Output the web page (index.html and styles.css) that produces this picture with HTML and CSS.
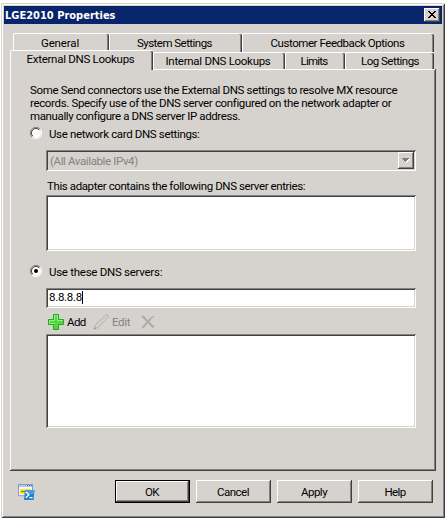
FILE: index.html
```html
<!DOCTYPE html>
<html lang="en">
<head>
<meta charset="utf-8">
<title>LGE2010 Properties</title>
<link rel="stylesheet" href="styles.css">
</head>
<body>
<div class="window">
  <div class="titlebar">
    <span class="title">LGE2010 Properties</span>
    <span class="close">
      <svg width="8" height="7" viewBox="0 0 8 7" shape-rendering="crispEdges"><path d="M0 0h2v1h1v1h2v-1h1v-1h2v1h-1v1h-1v1h-1v1h1v1h1v1h1v1h-2v-1h-1v-1h-2v1h-1v1h-2v-1h1v-1h1v-1h1v-1h-1v-1h-1v-1h-1z"/></svg>
    </span>
  </div>

  <div class="tabs back">
    <div class="tab general">General</div>
    <div class="tab system">System Settings</div>
    <div class="tab feedback">Customer Feedback Options</div>
  </div>
  <div class="tabs front">
    <div class="tab external selected">External DNS Lookups</div>
    <div class="tab internal">Internal DNS Lookups</div>
    <div class="tab limits">Limits</div>
    <div class="tab log">Log Settings</div>
  </div>

  <div class="panel">
    <p class="intro">Some Send connectors use the External DNS settings to resolve MX resource<br>records. Specify use of the DNS server configured on the network adapter or<br><span class="tight">manually configure a DNS server IP address.</span></p>

    <div class="option">
      <svg class="radio" width="12" height="12" viewBox="0 0 12 12"><circle cx="6" cy="6" r="4.8" fill="#fff"/><path d="M2 10A5.5 5.5 0 0 1 10 2" fill="none" stroke="#808080"/><path d="M2.8 9.2A4.5 4.5 0 0 1 9.2 2.8" fill="none" stroke="#404040"/><path d="M2 10A5.5 5.5 0 0 0 10 2" fill="none" stroke="#fff"/></svg>
      <span>Use network card DNS settings:</span>
    </div>

    <div class="combo">
      <span class="combo-text">(All Available IPv4)</span>
      <span class="drop"><svg width="8" height="5" viewBox="0 0 8 5" shape-rendering="crispEdges"><path d="M1 1h7v1h-1v1h-1v1h-1v1h-1v-1z" fill="#fff"/><path d="M0 0h7v1h-1v1h-1v1h-1v1h-1v-1h-1v-1h-1v-1h-1z" fill="#808080"/></svg></span>
    </div>
    <div class="label">This adapter contains the following DNS server entries:</div>
    <div class="list adapters"></div>

    <div class="option second">
      <svg class="radio" width="12" height="12" viewBox="0 0 12 12"><circle cx="6" cy="6" r="4.8" fill="#fff"/><path d="M2 10A5.5 5.5 0 0 1 10 2" fill="none" stroke="#808080"/><path d="M2.8 9.2A4.5 4.5 0 0 1 9.2 2.8" fill="none" stroke="#404040"/><path d="M2 10A5.5 5.5 0 0 0 10 2" fill="none" stroke="#fff"/><circle cx="6" cy="6" r="2" fill="#000"/></svg>
      <span class="these">Use these DNS servers:</span>
    </div>
    <div class="field"><span>8.8.8.8</span><i class="caret"></i></div>

    <div class="toolbar">
      <svg width="16" height="16" viewBox="0 0 16 16"><path d="M5.5 .5h5v5h5v5h-5v5h-5v-5h-5v-5h5z" fill="#4fd93f" stroke="#22a51f" stroke-linejoin="round"/><path d="M6.5 9.5h-5v-3h5v-5h3v5h5" fill="none" stroke="#9bf088"/></svg>
      <span class="add">Add</span>
      <svg class="pencil" width="16" height="16" viewBox="0 0 16 16"><path d="M1 15l1.5-4.2L12.5 1.2q1.2-.8 2.2.2t.2 2.2L5 13.4z" fill="#d9d7d3" stroke="#aaa8a4" stroke-width=".9"/><path d="M3.5 12L13 3M11.3 2.3l2.5 2.5" stroke="#bbb9b5" fill="none" stroke-width=".7"/><path d="M1 15l.7-2 1.3 1.3z" fill="#888"/></svg>
      <span class="edit">Edit</span>
      <svg class="remove" width="14" height="14" viewBox="0 0 14 14"><path d="M.3 1.4L2.2.3Q4.5 2.8 7 5.2Q10 1.7 13 .6L13.5 1.3Q10.5 3.4 8.4 6.6L13.4 11.8L11.5 13L7 8.2Q4.5 10.8 2.5 13.6L.8 12.8Q3 9.3 5.6 6.8Z" fill="#adaba8"/></svg>
    </div>
    <div class="list servers"></div>
  </div>

  <div class="footer">
    <svg class="script-icon" width="17" height="17" viewBox="0 0 17 17"><path d="M.5.5h14v11.2H.5z" fill="#f4f7fd" stroke="#8299c7"/><path d="M1 1h13v2H1z" fill="#b4c5e6"/><path d="M9 1.5h1M11 1.5h1M13 1.5h1" stroke="#50689d"/><path d="M2 5h11v5H2z" fill="#ffdf1d"/><path d="M3 7.5h5" stroke="#907718"/><path d="M7 6h9.5l-1 10H6z" fill="#2382c9"/><path d="M7 6h9.5l-.4 4H6.6z" fill="#469ed9"/><path d="M8 8l3 2.8-3.3 2.9M11.5 13.7h3" fill="none" stroke="#fff" stroke-width="1.3"/></svg>
    <div class="buttons">
      <div class="button default">OK</div>
      <div class="button">Cancel</div>
      <div class="button">Apply</div>
      <div class="button help">Help</div>
    </div>
  </div>
</div>
</body>
</html>
```
FILE: styles.css
```css
* { box-sizing: border-box; }
body {
  margin: 0;
  padding: 3px 0 0 1px;
  background: #fff;
  color: #000;
  font: 11.5px/13px Roboto, "Liberation Sans", sans-serif;
  letter-spacing: -.35px;
  white-space: nowrap;
}
svg { display: block; flex: none; }

.window {
  width: 444px;
  height: 515px;
  padding: 3px;
  background: #d6d3ce;
  box-shadow: inset 1px 1px #d6d3ce, inset -1px -1px #424142, inset 2px 2px #fff, inset -2px -2px #848284;
}
.titlebar {
  display: flex;
  justify-content: space-between;
  height: 18px;
  padding: 2px 2px 0 1px;
  background: #08246b;
  color: #fff;
}
.title {
  font: bold 11px/16px "DejaVu Sans Condensed", "DejaVu Sans", sans-serif;
  letter-spacing: 0;
}
.close {
  display: flex;
  width: 16px;
  height: 14px;
  padding: 3px 0 0 4px;
  background: #d6d3ce;
  box-shadow: inset -1px -1px #424142, inset 1px 1px #fff, inset -2px -2px #848284;
}

.tabs { display: flex; }
.back { margin: 9px 0 0 9px; height: 19px; }
.front { margin-left: 6px; height: 17px; }
.tab {
  height: 19px;
  padding: 3px 3px 0 0;
  text-align: center;
  border-top: 1px solid #fff;
  border-left: 1px solid #fff;
  border-radius: 2px 2px 0 0;
  background: #d6d3ce;
  box-shadow: inset -1px 0 #424142, inset -2px 0 #848284;
  line-height: 12px;
}
.front .tab { height: 17px; padding-top: 2px; }
.front .selected {
  position: relative;
  z-index: 1;
  height: 20px;
  margin-top: -2px;
}
.general { width: 96px; letter-spacing: -.15px; }
.system { width: 133px; letter-spacing: -.53px; }
.feedback { width: 192px; letter-spacing: -.44px; }
.external { width: 143px; letter-spacing: -.28px; }
.internal { width: 132px; letter-spacing: -.29px; }
.limits { width: 60px; letter-spacing: -.8px; }
.log { width: 89px; letter-spacing: -.5px; }
.tab.log { padding-right: 0; }
.tab.feedback { padding-right: 2px; }

.panel {
  width: 426px;
  height: 402px;
  margin-left: 6px;
  padding: 15px 20px 0;
  box-shadow: inset -1px -1px #424142, inset 1px 1px #fff, inset -2px -2px #848284;
}
.intro { margin: 0; }
.tight { letter-spacing: -.38px; }
.option {
  display: flex;
  gap: 7px;
  height: 13px;
  margin-top: 4px;
  line-height: 15px;
}
.second { margin-top: 14px; }
.these { letter-spacing: -.27px; }
.combo, .list, .field {
  width: 370px;
  margin-left: 16px;
  box-shadow: inset 1px 1px #848284, inset -1px -1px #fff, inset 2px 2px #424142, inset -2px -2px #d6d3ce;
}
.combo {
  display: flex;
  justify-content: space-between;
  height: 21px;
  margin-top: 10px;
  padding: 2px;
  color: #848284;
}
.combo-text { padding: 3px 0 0 2px; letter-spacing: -.38px; }
.drop {
  width: 16px;
  height: 17px;
  padding: 6px 0 0 4px;
  box-shadow: inset -1px -1px #424142, inset 1px 1px #fff, inset -2px -2px #848284;
}
.label {
  height: 15px;
  margin: 9px 0 0 17px;
  letter-spacing: -.4px;
}
.list { background: #fff; }
.adapters { height: 56px; }
.field {
  display: flex;
  height: 20px;
  margin-top: 10px;
  padding: 3px 0 0 3px;
  background: #fff;
  letter-spacing: -.28px;
}
.caret { width: 1px; height: 13px; background: #000; }
.toolbar {
  display: flex;
  height: 26px;
  padding: 6px 0 0 18px;
  line-height: 17px;
  color: #848284;
}
.add { width: 26px; padding-left: 3px; color: #000; letter-spacing: -.6px; }
.pencil { margin-left: 3px; }
.edit { width: 26px; padding-left: 3px; }
.remove { margin: 1px 0 0 6px; }
.servers { height: 94px; }

.footer {
  display: flex;
  justify-content: space-between;
  padding: 9px 9px 0 14px;
}
.script-icon { margin-top: 4px; }
.buttons { display: flex; gap: 6px; }
.button {
  width: 75px;
  height: 23px;
  padding-right: 1px;
  text-align: center;
  line-height: 24px;
  letter-spacing: -.5px;
  box-shadow: inset -1px -1px #424142, inset 1px 1px #fff, inset -2px -2px #848284;
}
.default {
  border: 1px solid #000;
  line-height: 22px;
}
.help { letter-spacing: -.6px; }
```
